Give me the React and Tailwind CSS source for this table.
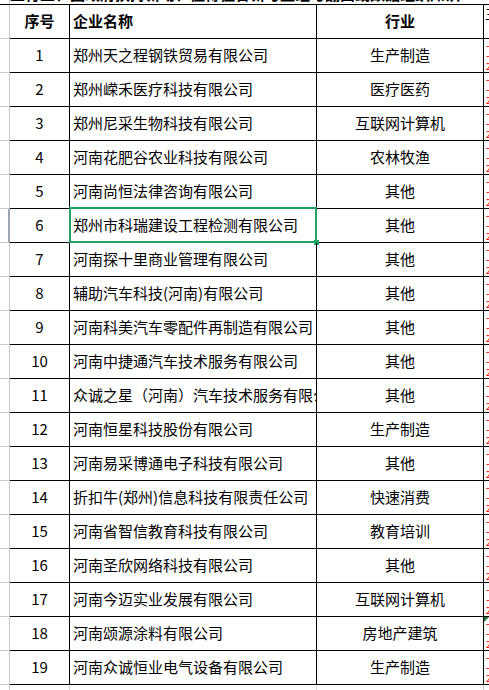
import React from 'react';

const rows = [
  ['1', '郑州天之程钢铁贸易有限公司', '生产制造'],
  ['2', '郑州嵘禾医疗科技有限公司', '医疗医药'],
  ['3', '郑州尼采生物科技有限公司', '互联网计算机'],
  ['4', '河南花肥谷农业科技有限公司', '农林牧渔'],
  ['5', '河南尚恒法律咨询有限公司', '其他'],
  ['6', '郑州市科瑞建设工程检测有限公司', '其他'],
  ['7', '河南探十里商业管理有限公司', '其他'],
  ['8', '辅助汽车科技(河南)有限公司', '其他'],
  ['9', '河南科美汽车零配件再制造有限公司', '其他'],
  ['10', '河南中捷通汽车技术服务有限公司', '其他'],
  ['11', '众诚之星（河南）汽车技术服务有限公司', '其他'],
  ['12', '河南恒星科技股份有限公司', '生产制造'],
  ['13', '河南易采博通电子科技有限公司', '其他'],
  ['14', '折扣牛(郑州)信息科技有限责任公司', '快速消费'],
  ['15', '河南省智信教育科技有限公司', '教育培训'],
  ['16', '河南圣欣网络科技有限公司', '其他'],
  ['17', '河南今迈实业发展有限公司', '互联网计算机'],
  ['18', '河南颂源涂料有限公司', '房地产建筑'],
  ['19', '河南众诚恒业电气设备有限公司', '生产制造'],
];

// red text spilling in from the next column, only its left edge shows
function Spill() {
  return (
    <div className="w-[9px] pl-[2px] pt-[3px] text-[#e00000] text-[9px] leading-[10px] break-all">
      一一2
    </div>
  );
}

export default function App() {
  return (
    <div className="w-[489px] h-[690px] overflow-hidden bg-white text-black font-['Noto_Sans_CJK_SC',sans-serif]">
      {/* title row cut off above */}
      <div className="h-[4px] overflow-hidden flex">
        <div className="w-[10px] shrink-0 border-r border-[#c3c8d4]" />
        <div className="-mt-[14px] text-[15px] leading-[16px] font-bold whitespace-nowrap">
          兰行业、因政府扶持新动、值得值合新与重组与翻面或数据组织知识
        </div>
      </div>

      {/* header */}
      <div className="flex h-[35px] border-t border-black">
        <div className="w-[10px] shrink-0 border-r border-b border-[#c3c8d4]" />
        <div className="w-[60px] shrink-0 border-r border-b border-black flex items-center justify-center text-[15px] font-bold">序号</div>
        <div className="w-[247px] shrink-0 border-r border-b border-black flex items-center pl-[3px] text-[15px] font-bold">企业名称</div>
        <div className="w-[167px] shrink-0 border-r border-b border-black flex items-center justify-center text-[15px] font-bold">行业</div>
        <div className="w-[5px] shrink-0 border-b border-black overflow-hidden">
          <div className="pl-[1px] pt-[2px] text-[13px] leading-[14px] whitespace-nowrap">三</div>
        </div>
      </div>

      {rows.map(([no, name, trade]) => {
        const selected = no === '6';
        return (
          <div key={no} className="flex h-[34px]">
            <div className={`w-[10px] shrink-0 border-b border-[#c3c8d4] ${selected ? 'border-r-2 border-r-[#9da3b0]' : 'border-r'}`} />
            <div className="w-[60px] shrink-0 border-r border-b border-black flex items-center justify-center text-[15px]">{no}</div>
            <div className="relative w-[247px] shrink-0 border-r border-b border-black flex items-center pl-[3px] text-[15px] whitespace-nowrap">
              <span className="overflow-hidden">{name}</span>
              {selected && (
                <>
                  <div className="absolute -left-[1px] -top-[2px] -right-[1px] -bottom-[1px] border-2 border-[#21a366]" />
                  <div className="absolute -right-[3px] -bottom-[3px] w-[5px] h-[5px] bg-[#21a366]" />
                </>
              )}
            </div>
            <div className="w-[167px] shrink-0 border-r border-b border-black flex items-center justify-center text-[15px]">{trade}</div>
            <div className="relative w-[5px] shrink-0 border-b border-black overflow-hidden">
              {no === '18' && (
                <div className="absolute left-0 top-0 w-0 h-0 border-t-[5px] border-t-[#1f7a2e] border-r-[5px] border-r-transparent" />
              )}
              <Spill />
            </div>
          </div>
        );
      })}

      {/* next row, plain gridlines */}
      <div className="flex h-[20px]">
        <div className="w-[10px] shrink-0 border-r border-[#c3c8d4]" />
        <div className="w-[60px] shrink-0 border-r border-[#d4d4d4]" />
        <div className="w-[247px] shrink-0 border-r border-[#d4d4d4]" />
        <div className="w-[167px] shrink-0 border-r border-[#c8c8c8]" />
      </div>
    </div>
  );
}
